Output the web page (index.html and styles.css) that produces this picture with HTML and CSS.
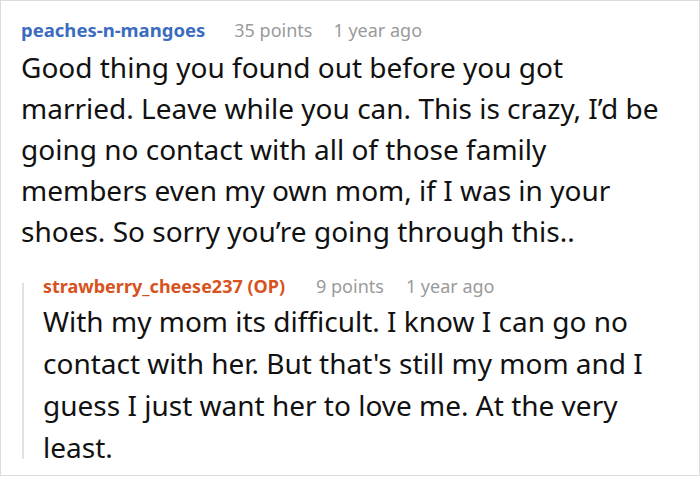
FILE: index.html
```html
<!DOCTYPE html>
<html>
<head>
<meta charset="utf-8">
<link rel="stylesheet" href="styles.css">
</head>
<body>
<div class="box">
  <div class="comment">
    <div class="meta">
      <span class="user">peaches-n-mangoes</span>
      <span class="info points">35 points</span>
      <span class="info time">1 year ago</span>
    </div>
    <p class="text main">Good thing you found out before you got married. Leave while you can. This is crazy, I’d be going no contact with all of those family members even my own mom, if I was in your shoes. So sorry you’re going through this..</p>
  </div>
  <div class="reply">
    <div class="rail"></div>
    <div class="reply-body">
      <div class="meta">
        <span class="user op">strawberry_cheese237 (OP)</span>
        <span class="info points">9 points</span>
        <span class="info time">1 year ago</span>
      </div>
      <p class="text small">With my mom its difficult. I know I can go no contact with her. But that's still my mom and I guess I just want her to love me. At the very least.</p>
    </div>
  </div>
</div>
</body>
</html>
```
FILE: styles.css
```css
html, body {
  margin: 0;
  padding: 0;
  background: #fff;
}
body {
  font-family: "Noto Sans", "Open Sans", sans-serif;
  color: #111;
}
.box {
  box-sizing: border-box;
  width: 700px;
  height: 476px;
  border: 1px solid #dcdcdc;
  padding: 17px 14px 0 20px;
  overflow: hidden;
}
.meta {
  display: flex;
  align-items: baseline;
  line-height: 24px;
  white-space: nowrap;
}
.user {
  font-size: 18.5px;
  font-weight: 700;
  color: #3b6cbf;
}
.user.op {
  font-size: 18px;
  color: #d6531e;
}
.info {
  font-size: 18px;
  color: #9a9a9a;
}
.points {
  margin-left: 29px;
}
.time {
  margin-left: 21px;
}
.reply .points {
  margin-left: 31px;
}
.reply .time {
  margin-left: 22px;
}
.text {
  margin: 0;
  font-size: 28px;
  line-height: 41px;
  padding-top: 5px;
}
.text.main {
  max-width: 648px;
}
.reply {
  display: flex;
  margin-top: 22px;
}
.rail {
  width: 2px;
  flex: none;
  background: #e2e2e2;
  margin: 9px 0 9px 1px;
}
.reply-body {
  padding-left: 19px;
}
.text.small {
  line-height: 42px;
  padding-top: 2px;
}
```
